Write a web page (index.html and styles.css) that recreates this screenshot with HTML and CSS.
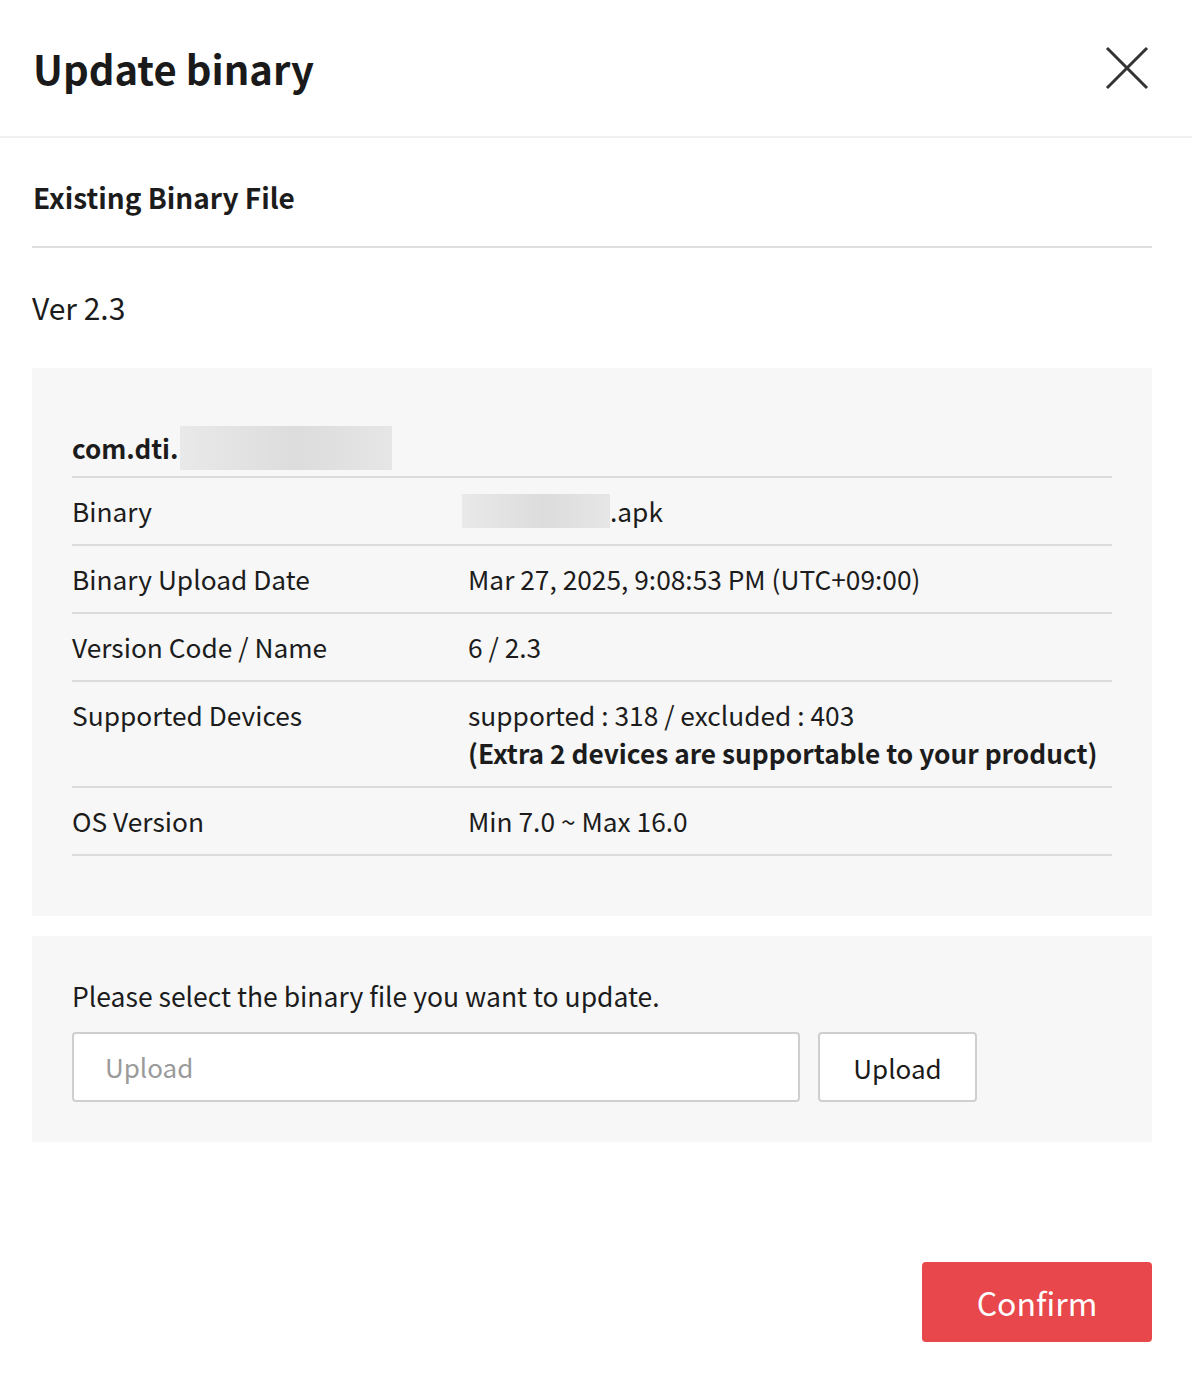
FILE: index.html
```html
<!DOCTYPE html>
<html lang="en">
<head>
<meta charset="utf-8">
<title>Update binary</title>
<link rel="stylesheet" href="styles.css">
</head>
<body>
<div class="modal">
  <header class="modal-header">
    <h1 class="modal-title">Update binary</h1>
    <button class="close-btn" aria-label="Close">
      <svg width="44" height="44" viewBox="0 0 44 44"><path d="M2 2 L42 42 M42 2 L2 42" stroke="#333" stroke-width="3" fill="none"/></svg>
    </button>
  </header>
  <div class="modal-body">
    <h2 class="section-title">Existing Binary File</h2>
    <p class="version">Ver 2.3</p>
    <div class="info-box">
      <div class="pkg-row"><span class="pkg-name">com.dti.</span><span class="blur blur-pkg"></span></div>
      <div class="row"><div class="label">Binary</div><div class="value value-file"><span class="blur blur-bin"></span>.apk</div></div>
      <div class="row"><div class="label">Binary Upload Date</div><div class="value">Mar 27, 2025, 9:08:53 PM (UTC+09:00)</div></div>
      <div class="row"><div class="label">Version Code / Name</div><div class="value">6 / 2.3</div></div>
      <div class="row"><div class="label">Supported Devices</div><div class="value">supported : 318 / excluded : 403<br><strong>(Extra 2 devices are supportable to your product)</strong></div></div>
      <div class="row"><div class="label">OS Version</div><div class="value">Min 7.0 ~ Max 16.0</div></div>
    </div>
    <div class="upload-box">
      <p class="upload-text">Please select the binary file you want to update.</p>
      <div class="upload-row">
        <div class="upload-input">Upload</div>
        <button class="upload-btn">Upload</button>
      </div>
    </div>
    <div class="footer">
      <button class="confirm-btn">Confirm</button>
    </div>
  </div>
</div>
</body>
</html>
```
FILE: styles.css
```css
* { box-sizing: border-box; }
html, body { margin: 0; padding: 0; background: #fff; }
body {
  font-family: "Noto Sans CJK KR", "Source Sans Pro", "Noto Sans", sans-serif;
  color: #1c1c1c;
}
.modal { width: 1192px; }
.modal-header {
  height: 138px;
  border-bottom: 2px solid #f0f0f0;
  display: flex;
  align-items: center;
  justify-content: space-between;
  padding: 0 43px 0 33px;
}
.modal-title {
  margin: 0;
  font-size: 40px;
  font-weight: 700;
  line-height: 1;
  color: #1a1a1a;
}
.close-btn {
  border: 0;
  background: none;
  padding: 0;
  width: 44px;
  height: 44px;
  display: flex;
}
.modal-body { padding: 0 40px 0 32px; }
.section-title {
  margin: 0;
  padding: 38px 0 28px 1px;
  font-size: 28px;
  line-height: 42px;
  font-weight: 700;
  border-bottom: 2px solid #dedede;
}
.version {
  margin: 0;
  padding: 39px 0 41px;
  font-size: 30px;
  line-height: 40px;
}
.info-box {
  background: #f7f7f7;
  padding: 40px 40px 60px;
}
.pkg-row {
  display: flex;
  align-items: center;
  padding: 18px 0 6px;
  border-bottom: 2px solid #dcdcdc;
}
.pkg-name {
  font-size: 26px;
  font-weight: 700;
  line-height: 44px;
}
.blur {
  display: inline-block;
  background: linear-gradient(90deg, #e9e9e9 0%, #dcdcdc 55%, #e6e6e6 100%);
  filter: blur(0.5px);
}
.blur-pkg { width: 212px; height: 44px; margin-left: 2px; }
.blur-bin { width: 148px; height: 34px; margin-left: -6px; }
.row {
  display: flex;
  padding: 14px 0;
  border-bottom: 2px solid #dcdcdc;
  font-size: 26.3px;
  line-height: 38px;
}
.label { width: 396px; flex: none; }
.value { flex: 1; }
.value-file { display: flex; align-items: center; height: 38px; }
.value strong { font-weight: 700; white-space: nowrap; }
.upload-box {
  margin-top: 20px;
  background: #f7f7f7;
  padding: 40px 40px;
}
.upload-text {
  margin: 0 0 16px;
  font-size: 26.5px;
  line-height: 40px;
}
.upload-row { display: flex; gap: 18px; }
.upload-input {
  width: 728px;
  height: 70px;
  background: #fff;
  border: 2px solid #cfcfcf;
  border-radius: 4px;
  padding: 0 31px;
  font-size: 26px;
  line-height: 66px;
  color: #9a9a9a;
}
.upload-btn {
  width: 159px;
  height: 70px;
  background: #fff;
  border: 2px solid #cfcfcf;
  border-radius: 4px;
  font-family: inherit;
  font-size: 26px;
  color: #1a1a1a;
  padding: 0;
}
.footer {
  display: flex;
  justify-content: flex-end;
  padding: 120px 0 38px;
}
.confirm-btn {
  width: 230px;
  height: 80px;
  background: #e8474b;
  border: 0;
  border-radius: 4px;
  color: #fff;
  font-family: inherit;
  font-size: 32px;
  padding: 0;
}
```
